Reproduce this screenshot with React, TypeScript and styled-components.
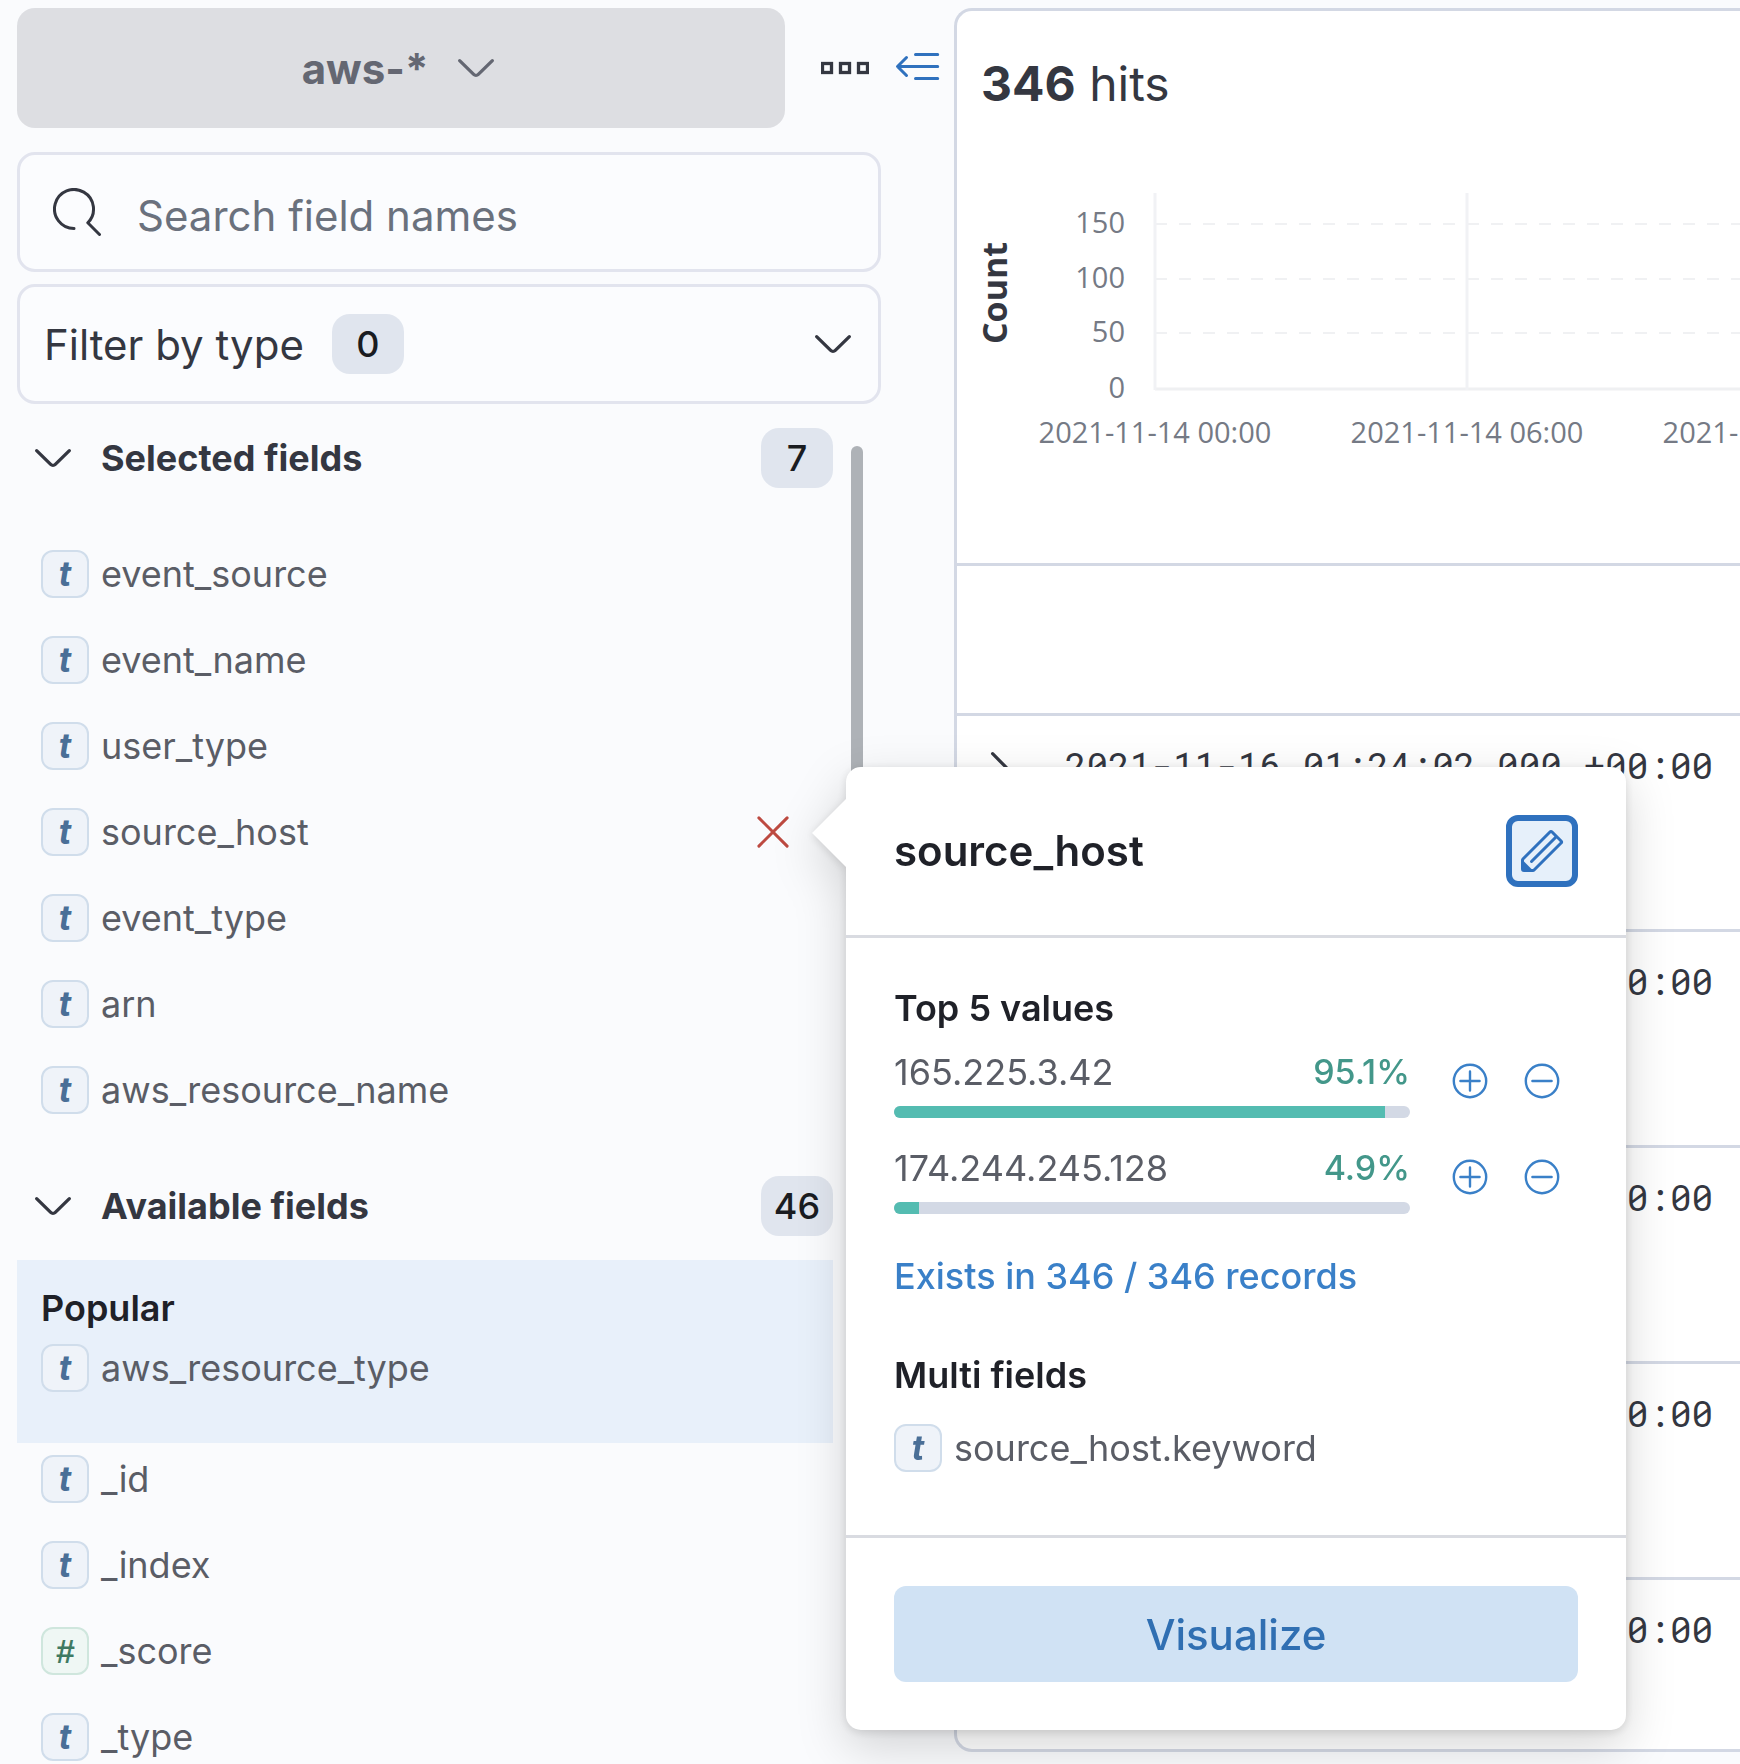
import React from "react";
import styled, { createGlobalStyle, css } from "styled-components";

const color = {
  page: "#fafbfd",
  panel: "#ffffff",
  ink: "#343741",
  title: "#1f2128",
  text: "#5a5d66",
  subdued: "#6a717d",
  line: "#d3d8e4",
  inputLine: "#e2e4ee",
  badge: "#e0e5ee",
  link: "#3a80c8",
  primary: "#2f71be",
  danger: "#bd4a41",
  success: "#43978a",
  bar: "#54bcb1",
};

const size = { xs: 34, s: 36, m: 42, l: 48 };

const GlobalStyle = createGlobalStyle`
  *, *::before, *::after { box-sizing: border-box; }
  body {
    margin: 0;
    background: ${color.page};
    color: ${color.ink};
    font-family: Inter, "Liberation Sans", sans-serif;
    font-size: ${size.s}px;
  }
  button, input { font: inherit; color: inherit; }
  ul { list-style: none; margin: 0; padding: 0; }
`;

const Shell = styled.div`
  position: relative;
  display: flex;
  gap: 13px;
  height: 100vh;
  overflow: hidden;
  padding: 8px 0 0 17px;
`;

/* ---------- icons ---------- */

const Svg = styled.svg`
  display: block;
  flex: none;
  width: 48px;
  height: 48px;
`;

const ArrowDown = () => (
  <Svg viewBox="0 0 16 16" fill="currentColor" aria-hidden="true">
    <path d="M13.069 5.157L8.384 9.768a.546.546 0 01-.768 0L2.93 5.158a.552.552 0 00-.771 0 .53.53 0 000 .759l4.684 4.61c.641.631 1.672.63 2.312 0l4.684-4.61a.53.53 0 000-.76.552.552 0 00-.771 0z" />
  </Svg>
);

const ArrowRight = () => (
  <Svg viewBox="0 0 16 16" fill="currentColor" aria-hidden="true">
    <path d="M5.157 13.069l4.611-4.685a.546.546 0 000-.768L5.158 2.93a.552.552 0 010-.771.53.53 0 01.759 0l4.61 4.684a1.65 1.65 0 010 2.312l-4.61 4.684a.53.53 0 01-.76 0 .552.552 0 010-.771z" />
  </Svg>
);

const SearchGlyph = () => (
  <Svg viewBox="0 0 16 16" fill="none" stroke="currentColor" strokeLinecap="round" strokeLinejoin="round" aria-hidden="true">
    <path d="M7 13.5A6.5 6.5 0 1 1 11.6 11.6L15.5 15.5" />
  </Svg>
);

const BoxesGlyph = () => (
  <Svg viewBox="0 0 16 16" fill="none" stroke="currentColor" strokeWidth="1.1" aria-hidden="true">
    <rect x=".5" y="6.5" width="3" height="3" />
    <rect x="6.5" y="6.5" width="3" height="3" />
    <rect x="12.5" y="6.5" width="3" height="3" />
  </Svg>
);

const MenuLeftGlyph = () => (
  <Svg viewBox="0 0 16 16" fill="none" stroke="currentColor" strokeLinecap="round" strokeLinejoin="round" aria-hidden="true">
    <path d="M7.5 3.5h7.4M1.6 7.5h13.3M7.5 11.5h7.4M4.5 4.5l-3 3 3 3" />
  </Svg>
);

const CrossGlyph = () => (
  <Svg viewBox="0 0 16 16" fill="none" stroke="currentColor" strokeLinecap="round" aria-hidden="true">
    <path d="M3.3 3.3l9.4 9.4M12.7 3.3l-9.4 9.4" />
  </Svg>
);

const PencilGlyph = () => (
  <Svg viewBox="0 0 16 16" fill="currentColor" aria-hidden="true">
    <path
      fillRule="evenodd"
      d="M12.148 3.148L11 2l-9 9v3h3l9-9-1.144-1.144-8.002 7.998a.502.502 0 01-.708 0 .502.502 0 010-.708l8.002-7.998zM11 1c.256 0 .512.098.707.293l3 3a.999.999 0 010 1.414l-9 9A.997.997 0 015 15H2a1 1 0 01-1-1v-3c0-.265.105-.52.293-.707l9-9A.997.997 0 0111 1z"
    />
    <path d="M5 14.5H1.5V11z" />
  </Svg>
);

const CircleGlyph = ({ plus }: { plus?: boolean }) => (
  <Svg viewBox="0 0 16 16" fill="none" stroke="currentColor" strokeWidth=".8" strokeLinecap="round" aria-hidden="true">
    <circle cx="8" cy="8" r="5.4" />
    <path d={plus ? "M4.8 8h6.4M8 4.8v6.4" : "M4.8 8h6.4"} />
  </Svg>
);

/* ---------- sidebar ---------- */

const Sidebar = styled.aside`
  flex: none;
  display: flex;
  flex-direction: column;
  width: 924px;
`;

const PatternBar = styled.div`
  display: flex;
  align-items: center;
  gap: 24px;
  margin-bottom: 24px;
`;

const PatternButton = styled.button`
  flex: 1;
  display: flex;
  align-items: center;
  justify-content: center;
  gap: 24px;
  height: 120px;
  margin-right: 12px;
  padding: 0;
  border: 0;
  border-radius: 18px;
  background: #dddee2;
  color: #646772;
  font-size: ${size.m}px;
  font-weight: 700;
`;

const IconButton = styled.button<{ $tone?: string }>`
  flex: none;
  padding: 0;
  border: 0;
  background: none;
  color: ${(p) => p.$tone ?? color.ink};
`;

const fieldBox = css`
  display: flex;
  align-items: center;
  height: 120px;
  margin: 0 60px 12px 0;
  border: 3px solid ${color.inputLine};
  border-radius: 18px;
  background: #fbfcfe;
  font-size: ${size.m}px;
`;

const SearchBox = styled.label`
  ${fieldBox}
  gap: 36px;
  padding: 0 33px;
`;

const SearchInput = styled.input`
  flex: 1;
  min-width: 0;
  padding: 6px 0 0;
  border: 0;
  outline: 0;
  background: none;
  &::placeholder {
    color: ${color.subdued};
    opacity: 1;
  }
`;

const FilterButton = styled.button`
  ${fieldBox}
  gap: 28px;
  padding: 0 21px 0 24px;
  text-align: left;
`;

const Spacer = styled.span`
  flex: 1;
`;

const Count = styled.span`
  display: grid;
  place-items: center;
  min-width: 72px;
  height: 60px;
  padding: 0 12px;
  border-radius: 18px;
  background: ${color.badge};
  color: #1a1c21;
  font-size: ${size.s}px;
  font-weight: 500;
`;

const Scroller = styled.div`
  display: flex;
  gap: 18px;
  min-height: 0;
  padding-top: 12px;
  overflow: hidden;
`;

const Lists = styled.div`
  width: 816px;
`;

const ScrollThumb = styled.div`
  width: 12px;
  height: 640px;
  margin-top: 18px;
  border-radius: 6px;
  background: #aeb2b7;
`;

const SectionButton = styled.button`
  display: flex;
  align-items: center;
  gap: 24px;
  width: 100%;
  height: 60px;
  padding: 0 0 0 12px;
  border: 0;
  background: none;
  font-weight: 700;
`;

const FieldList = styled.ul<{ $spaced?: boolean }>`
  display: flex;
  flex-direction: column;
  gap: 38px;
  padding: 0 36px 0 24px;
  margin: ${(p) => (p.$spaced ? "62px 0" : "12px 0 0")};
`;

const FieldItem = styled.li`
  display: flex;
  align-items: center;
  gap: 12px;
  height: 48px;
  color: ${color.text};
`;

const Token = styled.span<{ $number?: boolean }>`
  flex: none;
  display: grid;
  place-items: center;
  width: 48px;
  height: 48px;
  border: 2px solid ${(p) => (p.$number ? "#cfe6dd" : "#d0ddeb")};
  border-radius: 12px;
  background: ${(p) => (p.$number ? "#eff7f4" : "#eff3f9")};
  color: ${(p) => (p.$number ? "#3f7a62" : "#4a6f97")};
  font-family: ${(p) => (p.$number ? '"Liberation Sans", Arial, sans-serif' : "inherit")};
  font-size: ${size.xs}px;
  line-height: 36px;
  font-style: italic;
  font-weight: 700;
`;

const Popular = styled.div`
  margin-top: 24px;
  padding: 30px 24px 51px;
  background: #e8f0fa;
`;

const PopularTitle = styled.h3`
  margin: 0 0 18px;
  color: ${color.title};
  font-size: ${size.s}px;
  line-height: 36px;
  font-weight: 600;
`;

type FieldProps = { name: string; kind?: "t" | "#"; removable?: boolean };

const FieldContent = ({ name, kind = "t", removable }: FieldProps) => (
  <>
    <Token $number={kind === "#"}>{kind}</Token>
    <span>{name}</span>
    {removable && (
      <>
        <Spacer />
        <IconButton $tone={color.danger} aria-label={`Remove ${name}`}>
          <CrossGlyph />
        </IconButton>
      </>
    )}
  </>
);

const selectedFields: FieldProps[] = [
  { name: "event_source" },
  { name: "event_name" },
  { name: "user_type" },
  { name: "source_host", removable: true },
  { name: "event_type" },
  { name: "arn" },
  { name: "aws_resource_name" },
];

const availableFields: FieldProps[] = [
  { name: "_id" },
  { name: "_index" },
  { name: "_score", kind: "#" },
  { name: "_type" },
];

const SectionHeader = ({ title, count }: { title: string; count: number }) => (
  <SectionButton aria-expanded="true">
    <ArrowDown />
    {title}
    <Spacer />
    <Count>{count}</Count>
  </SectionButton>
);

/* ---------- results ---------- */

const Results = styled.main`
  flex: 1;
  display: flex;
  flex-direction: column;
  min-width: 0;
  margin-bottom: 12px;
  overflow: hidden;
  border: 3px solid ${color.line};
  border-right: 0;
  border-radius: 18px 0 0 18px;
  background: ${color.panel};
`;

const Hits = styled.h1`
  flex: none;
  margin: 0;
  padding: 42px 24px 0;
  font-size: ${size.l}px;
  line-height: 62px;
  font-weight: 400;
  strong { font-weight: 700; }
`;

const ChartArea = styled.svg`
  flex: none;
  display: block;
  width: 100%;
  height: 448px;
  font-family: "Open Sans", "Noto Sans", sans-serif;
`;

const Tick = styled.text`
  fill: #757a85;
  font-size: 29px;
`;

const AxisTitle = styled.text`
  fill: ${color.ink};
  font-size: ${size.xs}px;
  font-weight: 700;
`;

const TableBar = styled.div`
  flex: none;
  height: 153px;
  border: solid ${color.line};
  border-width: 3px 0;
`;

const DocTable = styled.table`
  width: 100%;
  border-spacing: 0;
  td {
    height: 216px;
    padding: 22px 0 0;
    border-bottom: 3px solid ${color.line};
    vertical-align: top;
  }
`;

const ExpandCell = styled.td`
  width: 108px;
  button { margin: 8px 0 0 19px; }
`;

const TimeCell = styled.td`
  font-family: "Roboto Mono", "DejaVu Sans Mono", monospace;
  line-height: 54px;
  white-space: nowrap;
`;

const yTicks = [
  { label: "150", y: 109 },
  { label: "100", y: 164 },
  { label: "50", y: 218 },
  { label: "0", y: 274 },
];

const xTicks = [
  { label: "2021-11-14 00:00", x: 198 },
  { label: "2021-11-14 06:00", x: 510 },
  { label: "2021-11-14 12:00", x: 822 },
];

const Histogram = () => (
  <ChartArea role="img" aria-label="Count over time">
    {yTicks.map((t) => (
      <g key={t.label}>
        <line
          x1="198"
          x2="100%"
          y1={t.y}
          y2={t.y}
          stroke={t.label === "0" ? "#eff0f2" : "#f0f1f3"}
          strokeWidth={t.label === "0" ? 3 : 2}
          strokeDasharray={t.label === "0" ? undefined : "12 12"}
        />
        <Tick x="168" y={t.y + 9} textAnchor="end">{t.label}</Tick>
      </g>
    ))}
    {xTicks.map((t) => (
      <g key={t.label}>
        <line x1={t.x} x2={t.x} y1="78" y2="275" stroke="#f1f2f5" strokeWidth="3" />
        <Tick x={t.x} y="328" textAnchor="middle">{t.label}</Tick>
      </g>
    ))}
    <AxisTitle transform="translate(50 178) rotate(-90)" textAnchor="middle">Count</AxisTitle>
  </ChartArea>
);

const rows = Array.from({ length: 5 }, (_, i) => ({ id: i, time: "2021-11-16 01:24:02.000 +00:00" }));

/* ---------- field popover ---------- */

const Popover = styled.section`
  position: absolute;
  top: 767px;
  left: 846px;
  width: 780px;
  border-radius: 15px;
  background: ${color.panel};
  filter: drop-shadow(0 2px 5px rgba(0, 0, 0, 0.12)) drop-shadow(0 16px 24px rgba(0, 0, 0, 0.16));
  &::before {
    content: "";
    position: absolute;
    top: 42px;
    left: -24px;
    width: 48px;
    height: 48px;
    background: ${color.panel};
    transform: rotate(45deg);
  }
`;

const PopoverHeader = styled.header`
  position: relative;
  display: flex;
  align-items: center;
  justify-content: space-between;
  padding: 48px;
  border-bottom: 3px solid #d9dbe1;
`;

const PopoverTitle = styled.h2`
  margin: 0;
  color: ${color.title};
  font-size: ${size.m}px;
  line-height: 48px;
  font-weight: 600;
`;

const EditButton = styled.button`
  display: grid;
  place-items: center;
  width: 72px;
  height: 72px;
  padding: 0;
  border: 6px solid ${color.primary};
  border-radius: 12px;
  background: #e6f0fa;
  color: ${color.primary};
`;

const PopoverBody = styled.div`
  padding: 48px 48px 63px;
  line-height: 44px;
`;

const PopoverSubtitle = styled.h3<{ $gap: number }>`
  margin: 0 0 ${(p) => p.$gap}px;
  color: ${color.title};
  font-size: ${size.s}px;
  font-weight: 600;
`;

const ValueList = styled.ul`
  display: flex;
  flex-direction: column;
  gap: 28px;
`;

const ValueItem = styled.li`
  display: flex;
  align-items: flex-start;
  height: 68px;
`;

const ValueMeter = styled.div`
  flex: 1;
  margin-right: 24px;
`;

const ValueLabel = styled.div`
  display: flex;
  justify-content: space-between;
  margin-bottom: 12px;
  color: ${color.text};
`;

const Percent = styled.span`
  color: ${color.success};
  font-size: ${size.xs}px;
  font-weight: 500;
`;

const Track = styled.div`
  height: 12px;
  overflow: hidden;
  border-radius: 6px;
  background: #d3d9e5;
`;

const Fill = styled.div`
  height: 100%;
  background: ${color.bar};
`;

const ValueAction = styled(IconButton)`
  display: grid;
  place-items: center;
  width: 72px;
  height: 62px;
`;

const ExistsLink = styled.a`
  display: block;
  margin: 40px 0 55px;
  color: ${color.link};
  font-weight: 500;
  text-decoration: none;
`;

const MultiField = styled.div`
  display: flex;
  align-items: center;
  gap: 12px;
  color: ${color.text};
`;

const PopoverFooter = styled.footer`
  padding: 48px;
  border-top: 3px solid #d9dbe1;
`;

const VisualizeButton = styled.button`
  display: block;
  width: 100%;
  height: 96px;
  padding: 0;
  border: 0;
  border-radius: 12px;
  background: #d0e2f4;
  color: #306fb2;
  font-size: ${size.m}px;
  font-weight: 500;
`;

const topValues = [
  { value: "165.225.3.42", percent: 95.1 },
  { value: "174.244.245.128", percent: 4.9 },
];

const FieldPopover = () => (
  <Popover role="dialog" aria-label="source_host">
    <PopoverHeader>
      <PopoverTitle>source_host</PopoverTitle>
      <EditButton aria-label="Edit field">
        <PencilGlyph />
      </EditButton>
    </PopoverHeader>
    <PopoverBody>
      <PopoverSubtitle $gap={20}>Top 5 values</PopoverSubtitle>
      <ValueList>
        {topValues.map((v) => (
          <ValueItem key={v.value}>
            <ValueMeter>
              <ValueLabel>
                <span>{v.value}</span>
                <Percent>{v.percent}%</Percent>
              </ValueLabel>
              <Track>
                <Fill style={{ width: `${v.percent}%` }} />
              </Track>
            </ValueMeter>
            <ValueAction $tone={color.link} aria-label={`Filter for ${v.value}`}>
              <CircleGlyph plus />
            </ValueAction>
            <ValueAction $tone={color.link} aria-label={`Filter out ${v.value}`}>
              <CircleGlyph />
            </ValueAction>
          </ValueItem>
        ))}
      </ValueList>
      <ExistsLink href="#exists">Exists in 346 / 346 records</ExistsLink>
      <PopoverSubtitle $gap={27}>Multi fields</PopoverSubtitle>
      <MultiField>
        <FieldContent name="source_host.keyword" />
      </MultiField>
    </PopoverBody>
    <PopoverFooter>
      <VisualizeButton>Visualize</VisualizeButton>
    </PopoverFooter>
  </Popover>
);

export default function App() {
  return (
    <>
      <GlobalStyle />
      <Shell>
        <Sidebar>
          <PatternBar>
            <PatternButton>
              aws-*
              <ArrowDown />
            </PatternButton>
            <IconButton aria-label="Index pattern settings">
              <BoxesGlyph />
            </IconButton>
            <IconButton $tone={color.primary} aria-label="Collapse sidebar">
              <MenuLeftGlyph />
            </IconButton>
          </PatternBar>
          <SearchBox>
            <SearchGlyph />
            <SearchInput type="text" placeholder="Search field names" aria-label="Search field names" />
          </SearchBox>
          <FilterButton>
            Filter by type
            <Count>0</Count>
            <Spacer />
            <ArrowDown />
          </FilterButton>
          <Scroller>
            <Lists>
              <SectionHeader title="Selected fields" count={7} />
              <FieldList $spaced>
                {selectedFields.map((f) => (
                  <FieldItem key={f.name}>
                    <FieldContent {...f} />
                  </FieldItem>
                ))}
              </FieldList>
              <SectionHeader title="Available fields" count={46} />
              <Popular>
                <PopularTitle>Popular</PopularTitle>
                <MultiField>
                  <FieldContent name="aws_resource_type" />
                </MultiField>
              </Popular>
              <FieldList>
                {availableFields.map((f) => (
                  <FieldItem key={f.name}>
                    <FieldContent {...f} />
                  </FieldItem>
                ))}
              </FieldList>
            </Lists>
            <ScrollThumb />
          </Scroller>
        </Sidebar>
        <Results>
          <Hits>
            <strong>346</strong> hits
          </Hits>
          <Histogram />
          <TableBar />
          <DocTable>
            <tbody>
              {rows.map((r) => (
                <tr key={r.id}>
                  <ExpandCell>
                    <IconButton aria-label="Expand document">
                      <ArrowRight />
                    </IconButton>
                  </ExpandCell>
                  <TimeCell>{r.time}</TimeCell>
                </tr>
              ))}
            </tbody>
          </DocTable>
        </Results>
        <FieldPopover />
      </Shell>
    </>
  );
}
